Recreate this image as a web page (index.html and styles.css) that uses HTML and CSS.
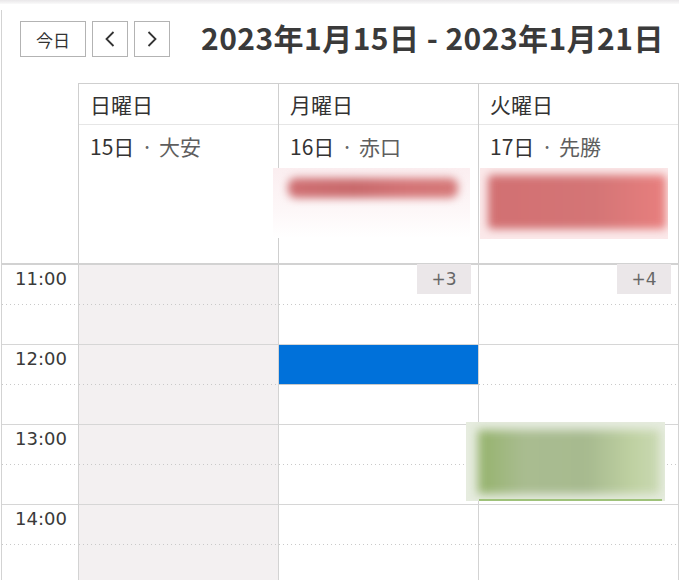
FILE: index.html
```html
<!DOCTYPE html>
<html lang="ja">
<head>
<meta charset="utf-8">
<title>カレンダー</title>
<link rel="stylesheet" href="styles.css">
</head>
<body>
<div class="shade"></div>
<div class="app">
  <div class="toolbar">
    <button class="btn today">今日</button>
    <button class="btn nav" aria-label="前へ"><svg width="10" height="16" viewBox="0 0 10 16"><polyline points="8.5,1 1.5,8 8.5,15" fill="none" stroke="#333" stroke-width="1.8"/></svg></button>
    <button class="btn nav" aria-label="次へ"><svg width="10" height="16" viewBox="0 0 10 16"><polyline points="1.5,1 8.5,8 1.5,15" fill="none" stroke="#333" stroke-width="1.8"/></svg></button>
    <h1 class="title">2023年1月15日 - 2023年1月21日</h1>
  </div>

  <div class="head">
    <div class="hgutter"></div>
    <div class="hday">
      <div class="dname">日曜日</div>
      <div class="ddate">15日<span class="dot">·</span><span class="rk">大安</span></div>
      <div class="allday"></div>
    </div>
    <div class="hday">
      <div class="dname">月曜日</div>
      <div class="ddate">16日<span class="dot">·</span><span class="rk">赤口</span></div>
      <div class="allday">
        <div class="blur-ev red-a"><div class="bar"></div></div>
      </div>
    </div>
    <div class="hday">
      <div class="dname">火曜日</div>
      <div class="ddate">17日<span class="dot">·</span><span class="rk">先勝</span></div>
      <div class="allday">
        <div class="blur-ev red-b"><div class="bar"></div></div>
      </div>
    </div>
  </div>

  <div class="grid">
    <div class="times">
      <div class="slot"><div class="half top"><span class="tl">11:00</span></div><div class="half"></div></div>
      <div class="slot"><div class="half top"><span class="tl">12:00</span></div><div class="half"></div></div>
      <div class="slot"><div class="half top"><span class="tl">13:00</span></div><div class="half"></div></div>
      <div class="slot"><div class="half top"><span class="tl">14:00</span></div><div class="half"></div></div>
    </div>
    <div class="col sun">
      <div class="slot"><div class="half top"></div><div class="half"></div></div>
      <div class="slot"><div class="half top"></div><div class="half"></div></div>
      <div class="slot"><div class="half top"></div><div class="half"></div></div>
      <div class="slot"><div class="half top"></div><div class="half"></div></div>
    </div>
    <div class="col">
      <div class="slot"><div class="half top"></div><div class="half"></div></div>
      <div class="slot"><div class="half top"></div><div class="half"></div></div>
      <div class="slot"><div class="half top"></div><div class="half"></div></div>
      <div class="slot"><div class="half top"></div><div class="half"></div></div>
      <div class="more">+3</div>
      <div class="ev blue"></div>
    </div>
    <div class="col">
      <div class="slot"><div class="half top"></div><div class="half"></div></div>
      <div class="slot"><div class="half top"></div><div class="half"></div></div>
      <div class="slot"><div class="half top"></div><div class="half"></div></div>
      <div class="slot"><div class="half top"></div><div class="half"></div></div>
      <div class="more">+4</div>
      <div class="blur-ev green"><div class="bar"></div><div class="line"></div></div>
    </div>
  </div>
</div>
</body>
</html>
```

FILE: styles.css
```css
* { box-sizing: border-box; }
html, body { margin: 0; padding: 0; background: #fff; }
body {
  width: 679px;
  height: 580px;
  overflow: hidden;
  position: relative;
  font-family: "Noto Sans CJK JP", "Noto Sans", sans-serif;
  color: #333;
}
.shade {
  position: absolute;
  left: 0; top: 0; right: 0;
  height: 4px;
  background: linear-gradient(#e9e7e9, #fafafa);
}
.app {
  margin-top: 10px;
  margin-left: 1px;
  border-left: 1px solid #d3d3d3;
  height: 570px;
}
.toolbar {
  display: flex;
  align-items: flex-start;
  height: 73px;
  padding: 11px 0 0 18px;
}
.btn {
  height: 36px;
  border: 1px solid #b3b3b3;
  background: #fff;
  color: #333;
  padding: 0;
  font-family: "Noto Sans CJK JP", sans-serif;
  font-size: 17px;
  display: flex;
  align-items: center;
  justify-content: center;
  margin-right: 6px;
}
.btn.today { width: 66px; }
.btn.nav { width: 36px; }
.title {
  margin: -3px 0 0 25px;
  font-size: 30px;
  font-weight: 700;
  color: #3a3a3a;
  line-height: 38px;
  letter-spacing: 0.45px;
  white-space: nowrap;
}
.head {
  display: grid;
  grid-template-columns: 76px 200px 200px 201px;
  height: 180px;
}
.hday {
  border-top: 1px solid #cfcfcf;
  border-left: 1px solid #cfcfcf;
  position: relative;
  display: flex;
  flex-direction: column;
}
.hday:last-child { border-right: 1px solid #cfcfcf; }
.dname {
  height: 41px;
  border-bottom: 1px solid #e6e6e6;
  font-size: 21px;
  line-height: 40px;
  padding-left: 11px;
  color: #333;
}
.ddate {
  height: 42px;
  font-size: 21px;
  line-height: 42px;
  padding-left: 11px;
  color: #333;
}
.dot { color: #666; margin: 0 6px 0 7px; }
.rk { color: #5e5e5e; }
.allday { flex: 1; position: relative; }

.grid {
  display: grid;
  grid-template-columns: 76px 200px 200px 201px;
  border-top: 2px solid #d2d2d2;
}
.times, .col { position: relative; }
.col { border-left: 1px solid #d3d3d3; }
.col:last-child { border-right: 1px solid #d3d3d3; }
.sun { background: #f3f0f1; }
.half {
  height: 40px;
  border-bottom: 1px solid #d6d6d6;
}
.half.top {
  border-bottom: 0;
  background: linear-gradient(to right, #c9c9c9 1px, transparent 1px) left bottom / 4px 1px repeat-x;
}
.tl {
  display: block;
  font-family: "DejaVu Sans", sans-serif;
  font-size: 18px;
  line-height: 22px;
  padding: 3px 0 0 13px;
  color: #3a3a3a;
}
.more {
  position: absolute;
  top: -1px;
  right: 7px;
  width: 54px;
  height: 30px;
  background: #ebe7e9;
  color: #666;
  font-family: "DejaVu Sans", sans-serif;
  font-size: 17px;
  line-height: 30px;
  text-align: center;
}
.ev.blue {
  position: absolute;
  left: 0;
  right: 0;
  top: 80px;
  height: 40px;
  background: #0071da;
  border-bottom: 1px solid #c8c8c8;
}
.blur-ev {
  position: absolute;
  overflow: hidden;
}
.blur-ev .bar { position: absolute; filter: blur(4px); }
.red-a {
  left: -6px; top: 1px; width: 197px; height: 70px;
  background: linear-gradient(to bottom, #fbeef0, #fdf7f8 60%, #fff);
}
.red-a .bar {
  left: 15px; top: 10px; width: 170px; height: 20px;
  border-radius: 8px;
  background: linear-gradient(to right, #cf6f72, #c96a6c 40%, #d47476 70%, #d57878);
}
.red-b {
  left: 1px; top: 1px; width: 188px; height: 71px;
  background: #fbe9ea;
}
.red-b .bar {
  left: 8px; top: 7px; width: 178px; height: 54px;
  border-radius: 4px;
  background: linear-gradient(to right, #d27072, #d47576 60%, #e87f7e);
}
.green {
  left: -13px; top: 157px; width: 199px; height: 79px;
  background: #e6ecdf;
}
.green .bar {
  left: 12px; top: 8px; width: 182px; height: 64px;
  filter: blur(5px);
  background: linear-gradient(to right, #95b36c, #a9bc90 25%, #a7ba8f 60%, #bfd1a2 85%, #cad9b3);
}
.green .line {
  position: absolute;
  left: 13px; bottom: 0; width: 183px; height: 2px;
  background: #9fc27a;
}
```
